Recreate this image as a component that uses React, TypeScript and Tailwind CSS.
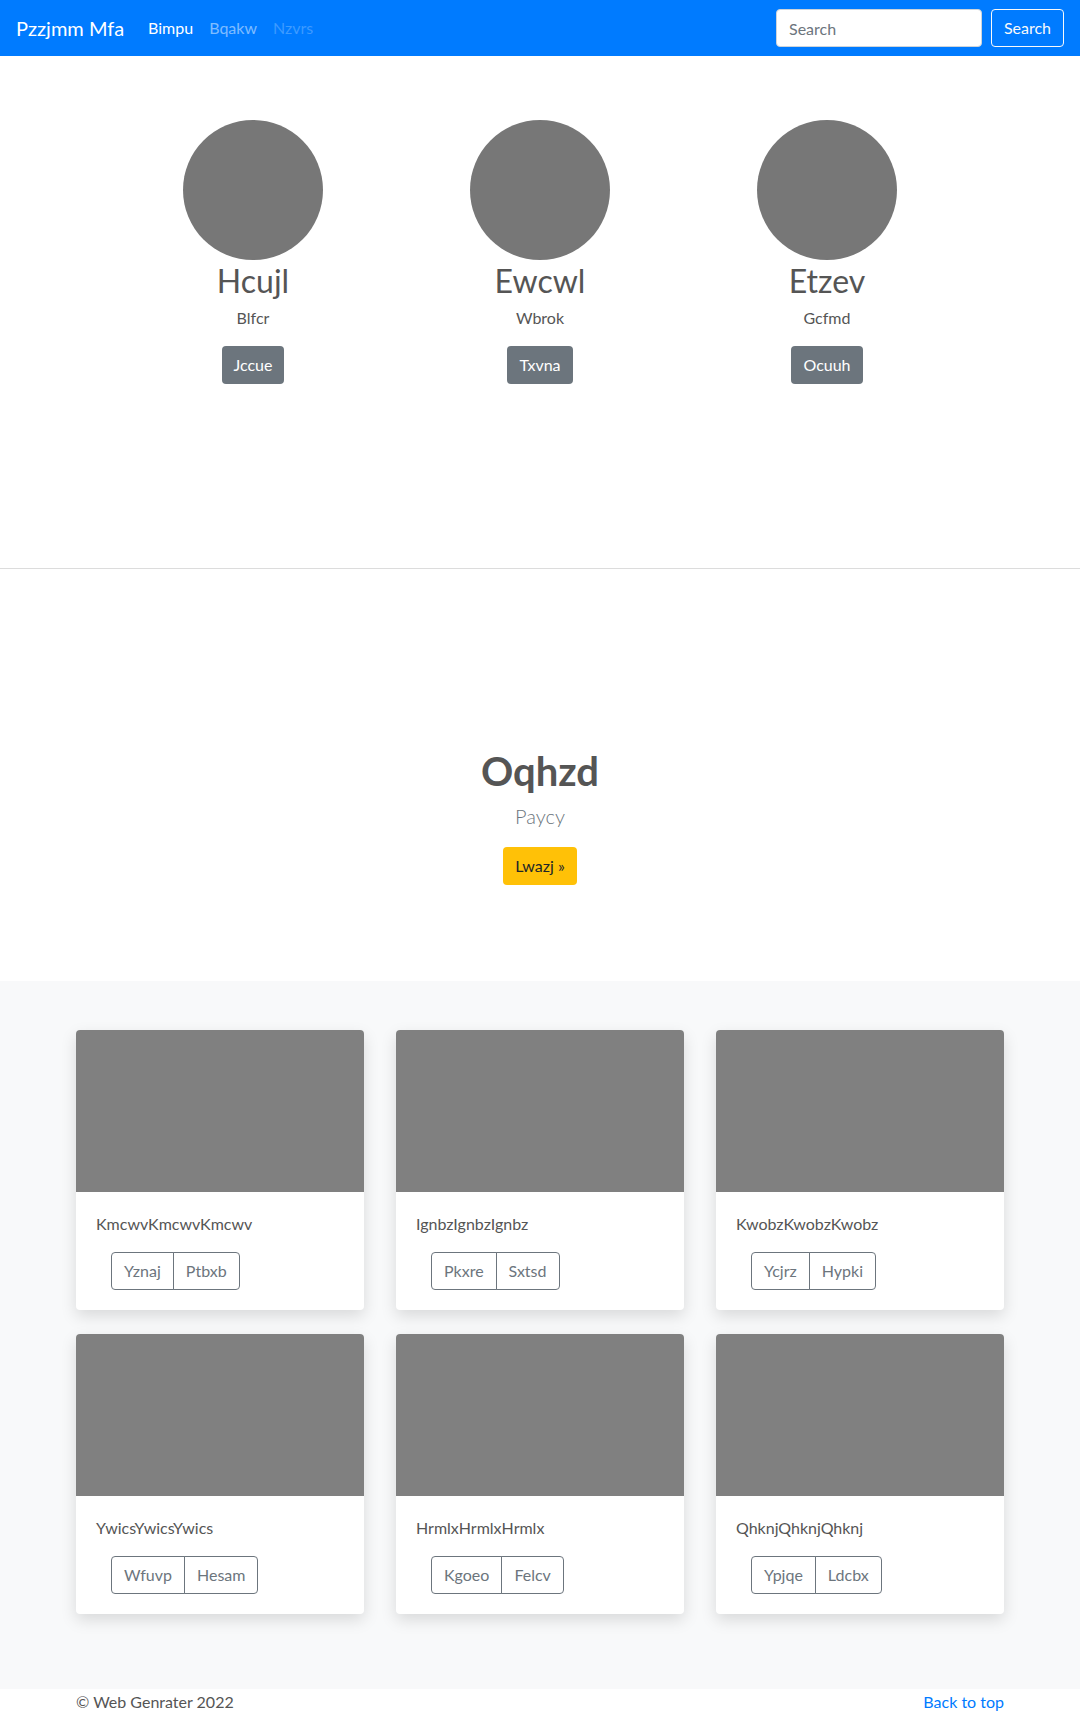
const font = { fontFamily: "Lato, 'Liberation Sans', sans-serif" };

const team = [
  { name: "Hcujl", role: "Blfcr", action: "Jccue" },
  { name: "Ewcwl", role: "Wbrok", action: "Txvna" },
  { name: "Etzev", role: "Gcfmd", action: "Ocuuh" },
];

const cards = [
  { title: "KmcwvKmcwvKmcwv", buttons: ["Yznaj", "Ptbxb"] },
  { title: "IgnbzIgnbzIgnbz", buttons: ["Pkxre", "Sxtsd"] },
  { title: "KwobzKwobzKwobz", buttons: ["Ycjrz", "Hypki"] },
  { title: "YwicsYwicsYwics", buttons: ["Wfuvp", "Hesam"] },
  { title: "HrmlxHrmlxHrmlx", buttons: ["Kgoeo", "Felcv"] },
  { title: "QhknjQhknjQhknj", buttons: ["Ypjqe", "Ldcbx"] },
];

function Navbar() {
  return (
    <nav className="flex h-14 items-center bg-[#007bff] px-4">
      <a className="mr-4 text-xl leading-[30px] text-white" href="#">
        Pzzjmm Mfa
      </a>
      <ul className="flex text-base">
        <li className="px-2 text-white">Bimpu</li>
        <li className="px-2 text-white/50">Bqakw</li>
        <li className="px-2 text-white/25">Nzvrs</li>
      </ul>
      <form className="ml-auto flex items-center gap-[9px]">
        <input
          className="h-[38px] w-[206px] rounded border border-[#ced4da] bg-white px-3 text-base text-[#495057] outline-none placeholder:text-[#6c757d]"
          placeholder="Search"
          style={font}
        />
        <button
          className="h-[38px] w-[73px] rounded border border-[#f8f9fa] text-base text-[#f8f9fa]"
          type="button"
        >
          Search
        </button>
      </form>
    </nav>
  );
}

function TeamMember({ name, role, action }: (typeof team)[number]) {
  return (
    <div className="flex flex-col items-center text-center">
      <div className="h-[140px] w-[140px] rounded-full bg-[#777]" />
      <h2 className="mt-[2px] mb-[6px] text-[32px] leading-[1.2] font-normal text-[#555]">{name}</h2>
      <p className="mb-4 text-base leading-6 text-[#555]">{role}</p>
      <button className="h-[38px] rounded bg-[#6c757d] px-3 text-base text-white" type="button">
        {action}
      </button>
    </div>
  );
}

function Card({ title, buttons }: (typeof cards)[number]) {
  return (
    <div className="h-[280px] rounded bg-white shadow-[0_6px_16px_rgba(0,0,0,0.13)]">
      <div className="h-[162px] rounded-t bg-[#808080]" />
      <div className="p-5">
        <p className="mb-4 text-base leading-6 text-[#555]">{title}</p>
        <div className="ml-[15px] inline-flex">
          {buttons.map((label, index) => (
            <button
              className={
                index === 0
                  ? "h-[38px] rounded-l border border-[#6c757d] px-3 text-base text-[#6c757d]"
                  : "-ml-px h-[38px] rounded-r border border-[#6c757d] px-3 text-base text-[#6c757d]"
              }
              key={label}
              type="button"
            >
              {label}
            </button>
          ))}
        </div>
      </div>
    </div>
  );
}

export default function App() {
  return (
    <div className="min-h-[1713px] bg-white" style={font}>
      <Navbar />

      <section className="mx-auto grid w-[861px] grid-cols-3 pt-16 pb-[184px]">
        {team.map((member) => (
          <TeamMember key={member.name} {...member} />
        ))}
      </section>

      <hr className="border-t border-[#dcdcdc]" />

      <section className="flex flex-col items-center pt-[178px] pb-[96px] text-center">
        <h1 className="mb-[6px] text-[40px] leading-[1.2] font-bold text-[#555]">Oqhzd</h1>
        <p className="mb-4 text-xl leading-[30px] font-light text-[#6c757d]">Paycy</p>
        <button className="h-[38px] rounded bg-[#ffc107] px-3 text-base text-[#212529]" type="button">
          Lwazj »
        </button>
      </section>

      <section className="bg-[#f8f9fa] pt-[49px] pb-[75px]">
        <div className="mx-auto grid w-[928px] grid-cols-3 gap-x-8 gap-y-6">
          {cards.map((card) => (
            <Card key={card.title} {...card} />
          ))}
        </div>
      </section>

      <footer className="mx-auto flex w-[928px] justify-between pt-px text-base leading-6">
        <p className="text-[#555]">© Web Genrater 2022</p>
        <a className="text-[#007bff]" href="#">
          Back to top
        </a>
      </footer>
    </div>
  );
}
